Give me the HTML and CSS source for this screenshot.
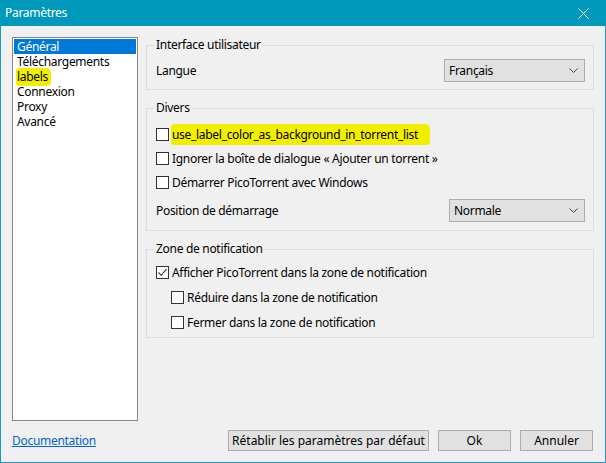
FILE: index.html
```html
<!DOCTYPE html>
<html lang="fr">
<head>
<meta charset="utf-8">
<title>Paramètres</title>
<link rel="stylesheet" href="styles.css">
</head>
<body>
<div class="window">
  <div class="titlebar">
    <span class="title">Paramètres</span>
    <svg class="close" width="11" height="11" viewBox="0 0 11 11"><path d="M0.5 0.5 L10.5 10.5 M10.5 0.5 L0.5 10.5" stroke="#fff" stroke-width="1" fill="none"/></svg>
  </div>
  <div class="body">
    <div class="main">
      <ul class="list">
        <li class="selected">Général</li>
        <li>Téléchargements</li>
        <li><span class="hl hl-small">labels</span></li>
        <li>Connexion</li>
        <li>Proxy</li>
        <li>Avancé</li>
      </ul>
      <div class="panel">
        <fieldset class="group g-ui">
          <legend>Interface utilisateur</legend>
          <div class="row field-row">
            <span>Langue</span>
            <div class="select select-lang"><span>Français</span><svg class="chev" width="9" height="5" viewBox="0 0 9 5"><path d="M0.5 0.5 L4.5 4.5 L8.5 0.5" stroke="#444" fill="none"/></svg></div>
          </div>
        </fieldset>
        <fieldset class="group g-misc">
          <legend>Divers</legend>
          <label class="check-row"><span class="box"></span><span class="hl hl-long">use_label_color_as_background_in_torrent_list</span></label>
          <label class="check-row"><span class="box"></span><span>Ignorer la boîte de dialogue « Ajouter un torrent »</span></label>
          <label class="check-row"><span class="box"></span><span>Démarrer PicoTorrent avec Windows</span></label>
          <div class="row field-row pos-row">
            <span>Position de démarrage</span>
            <div class="select select-pos"><span>Normale</span><svg class="chev" width="9" height="5" viewBox="0 0 9 5"><path d="M0.5 0.5 L4.5 4.5 L8.5 0.5" stroke="#444" fill="none"/></svg></div>
          </div>
        </fieldset>
        <fieldset class="group g-notif">
          <legend>Zone de notification</legend>
          <label class="check-row n-row"><span class="box checked"><svg width="11" height="11" viewBox="0 0 11 11"><path d="M1.5 5.5 L4.2 8.3 L9.5 2.2" stroke="#333" stroke-width="1.1" fill="none"/></svg></span><span>Afficher PicoTorrent dans la zone de notification</span></label>
          <label class="check-row n-row sub"><span class="box"></span><span>Réduire dans la zone de notification</span></label>
          <label class="check-row n-row sub"><span class="box"></span><span>Fermer dans la zone de notification</span></label>
        </fieldset>
      </div>
    </div>
    <div class="footer">
      <a class="doc" href="#">Documentation</a>
      <div class="buttons">
        <button class="btn btn-reset">Rétablir les paramètres par défaut</button>
        <button class="btn btn-small">Ok</button>
        <button class="btn btn-small">Annuler</button>
      </div>
    </div>
  </div>
</div>
</body>
</html>
```

FILE: styles.css
```css
* { box-sizing: border-box; }
html, body { margin: 0; padding: 0; }
body {
  font-family: "Noto Sans", "Open Sans", sans-serif;
  font-size: 12px;
  letter-spacing: -0.3px;
  color: #000;
  background: #f0f0f0;
}
.window {
  width: 606px;
  height: 463px;
  border: 1px solid #1a9bbd;
  border-top: none;
  background: #f0f0f0;
  display: flex;
  flex-direction: column;
}
.titlebar {
  height: 26px;
  margin: 0 -1px;
  background: #0099bc;
  color: #fff;
  display: flex;
  align-items: center;
  justify-content: space-between;
  padding: 0 17px 0 5px;
}
.title { line-height: 16px; }
.close { display: block; }
.body {
  flex: 1;
  padding: 11px 11px 0 11px;
  display: flex;
  flex-direction: column;
}
.main {
  display: flex;
  gap: 8px;
  height: 384px;
}
.list {
  list-style: none;
  margin: 0;
  padding: 1px 1px;
  width: 126px;
  height: 384px;
  background: #fff;
  border: 1px solid #828790;
}
.list li {
  height: 15px;
  line-height: 15px;
  padding-left: 3px;
  white-space: nowrap;
}
.list li.selected {
  background: #0078d7;
  color: #fff;
}
.hl {
  background: #f2ee00;
  border-radius: 3px 5px 4px 3px;
}
.hl-small { padding: 0 3px 1px 1px; margin-left: -1px; }
.hl-long { padding: 2px 12px 2px 1px; margin-left: -1px; }
.panel {
  width: 448px;
  display: flex;
  flex-direction: column;
}
.group {
  margin: 0;
  border: 1px solid #dcdcdc;
  padding: 0 8px 0 9px;
  min-width: 0;
}
.group legend {
  padding: 0 2px;
  margin-left: -2px;
  line-height: 16px;
}
.g-ui { padding-bottom: 7px; }
.g-misc { margin-top: 10px; padding-bottom: 8px; }
.g-notif { margin-top: 10px; padding-bottom: 2px; }
.field-row {
  display: flex;
  align-items: center;
  justify-content: space-between;
  height: 23px;
}
.g-ui .field-row { margin-top: 6px; }
.g-misc .check-row:first-of-type { margin-top: 6px; }
.pos-row { margin-top: 5px; }
.select {
  height: 23px;
  background: #e1e1e1;
  border: 1px solid #adadad;
  display: flex;
  align-items: center;
  justify-content: space-between;
  padding: 0 6px 0 4px;
}
.select-lang { width: 141px; }
.select-pos { width: 136px; }
.chev { display: block; }
.check-row {
  display: flex;
  align-items: center;
  height: 24px;
  white-space: nowrap;
}
.g-misc .check-row { height: 24px; }
.g-notif .check-row { height: 25px; }
.g-notif .check-row:first-of-type { margin-top: 3px; }
.box {
  width: 13px;
  height: 13px;
  border: 1px solid #333;
  background: #fff;
  margin-right: 3px;
  flex: none;
  display: flex;
  align-items: center;
  justify-content: center;
}
.sub { padding-left: 15px; }
.footer {
  margin-top: 9px;
  display: flex;
  align-items: center;
  justify-content: space-between;
  height: 21px;
}
.doc {
  color: #0066cc;
  text-decoration: underline;
}
.buttons {
  display: flex;
  gap: 9px;
  margin-right: 1px;
}
.btn {
  font: inherit;
  color: #000;
  height: 21px;
  background: #e1e1e1;
  border: 1px solid #adadad;
  border-radius: 0;
  padding: 0;
}
.btn-reset { width: 201px; }
.btn-small { width: 73px; }
```
